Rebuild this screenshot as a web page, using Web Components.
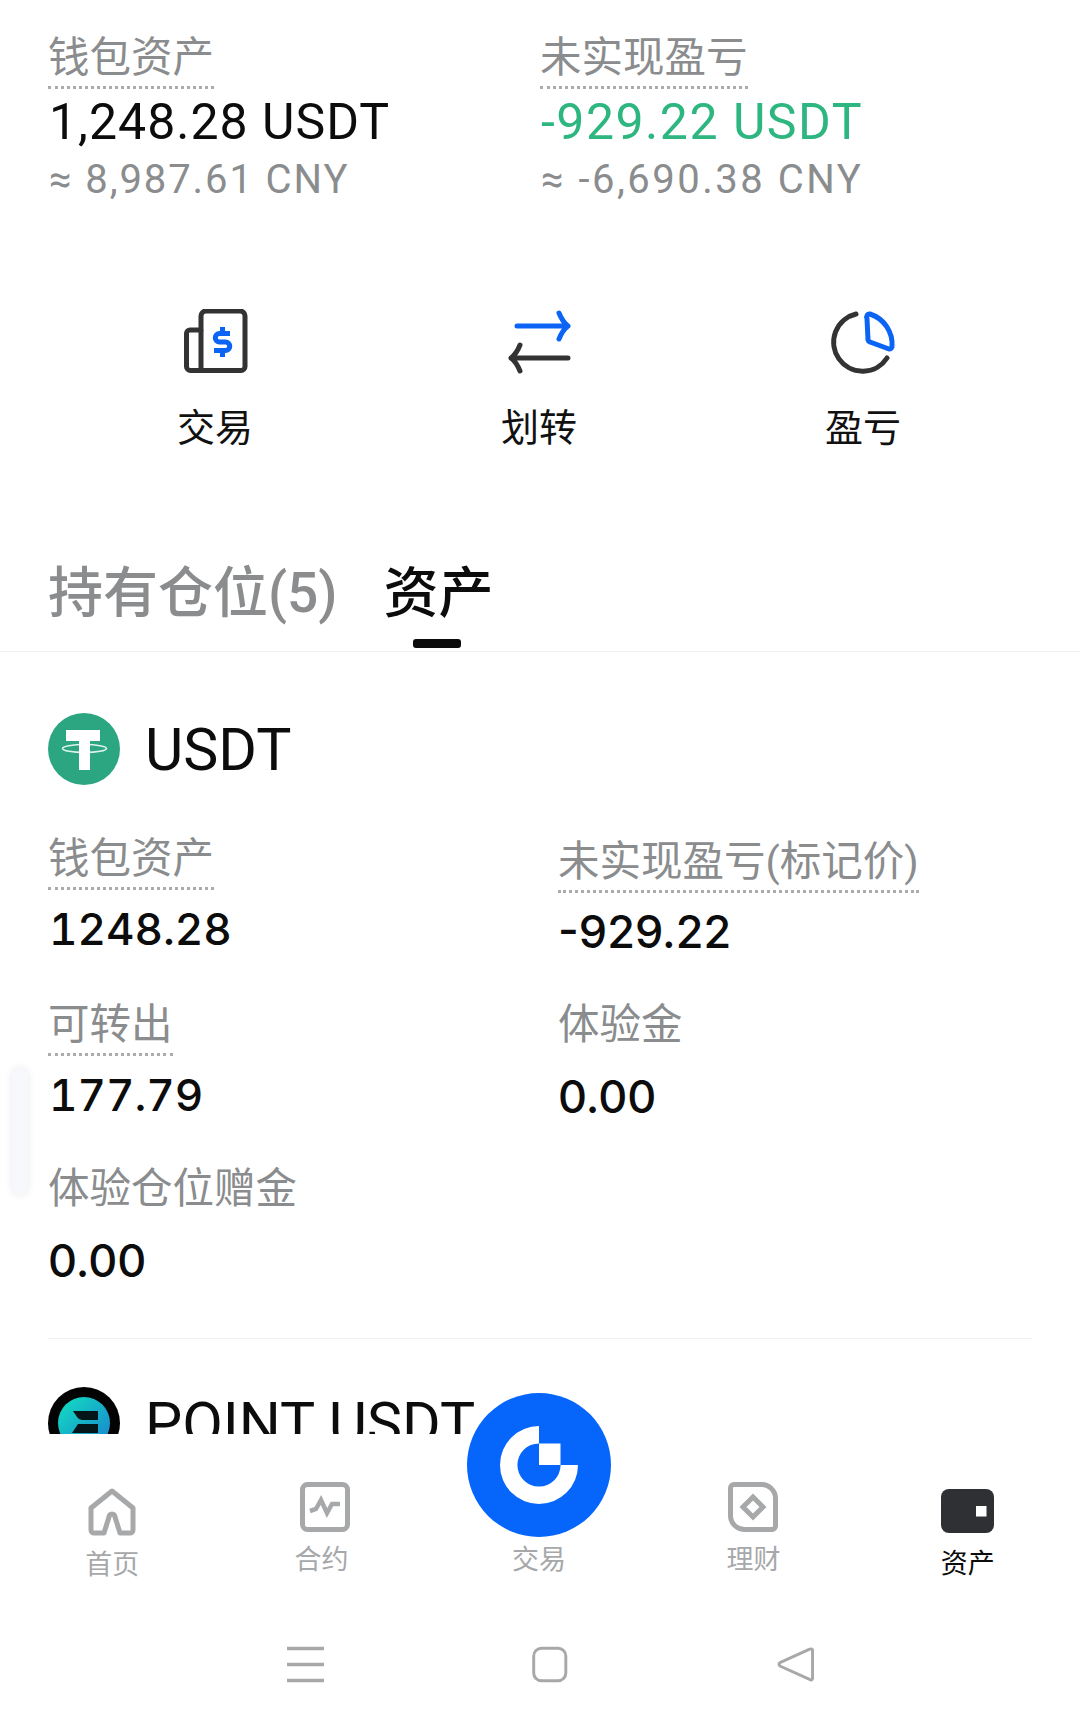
<!DOCTYPE html>
<html lang="zh">
<head>
<meta charset="utf-8">
<title>资产</title>
<style>
  html, body { margin: 0; padding: 0; background: #fff; }
  body { width: 1080px; height: 1729px; overflow: hidden; font-family: Roboto, "Noto Sans CJK SC", sans-serif; color: #0c0c0c; }
</style>
</head>
<body>
<wallet-screen>
  <div slot="scroll">
    <summary-row>
      <stat-item label="钱包资产" dotted value="1,248.28 USDT" sub="≈ 8,987.61 CNY"></stat-item>
      <stat-item label="未实现盈亏" dotted tone="green" value="-929.22 USDT" sub="≈ -6,690.38 CNY"></stat-item>
    </summary-row>
    <action-bar>
      <action-item label="交易">
        <svg width="66" height="66" viewBox="0 0 66 66" fill="none">
          <path d="M19 21H8a3.500 3.500 0 0 0-3.500 3.500V57.500a4 4 0 0 0 4 4H59a4 4 0 0 0 4-4V7a5 5 0 0 0-5-5H24a5 5 0 0 0-5 5Z" stroke="#333" stroke-width="5" stroke-linejoin="round"/>
          <path d="M19 21V61" stroke="#333" stroke-width="5"/>
          <path d="M48 24.500H37.500a4 4 0 0 0 0 8.500h6a4 4 0 0 1 0 8.500H32M40.500 18v6M40.500 41v7" stroke="#0b64f4" stroke-width="5"/>
        </svg>
      </action-item>
      <action-item label="划转">
        <svg width="66" height="66" viewBox="-2 0 66 66" fill="none" stroke-width="5" stroke-linecap="round" stroke-linejoin="round">
          <path d="M9 17H60M51 4C53 9 56 14 60 17C56 20 53 25 51 30" stroke="#0b64f4"/>
          <path d="M60 49H3M12 36C10 41 7 46 3 49C7 52 10 57 12 62" stroke="#333"/>
        </svg>
      </action-item>
      <action-item label="盈亏">
        <svg width="66" height="66" viewBox="0 0 66 66" fill="none" stroke-width="5" stroke-linecap="round" stroke-linejoin="round">
          <path d="M26 5A29 29 0 1 0 57 49" stroke="#333"/>
          <path d="M37 9.500A3 3 0 0 1 40 5A32 32 0 0 1 62 38A3 3 0 0 1 59 40L40 33A3 3 0 0 1 38 31Z" stroke="#0b64f4"/>
        </svg>
      </action-item>
    </action-bar>
    <tab-bar>
      <span>持有仓位(5)</span>
      <span slot="active">资产</span>
    </tab-bar>
    <asset-card name="USDT">
      <svg slot="icon" width="72" height="72" viewBox="0 0 72 72">
        <circle cx="36" cy="36" r="36" fill="#2ba680"/>
        <path d="M18 17H52V28H42V57H31V28H18Z" fill="#fff"/>
        <ellipse cx="36.500" cy="35.500" rx="22" ry="4" fill="none" stroke="#fff" stroke-width="1.600" opacity=".85"/>
      </svg>
      <div class="grid">
        <stat-item small tnum label="钱包资产" dotted value="1248.28"></stat-item>
        <stat-item small shift label="未实现盈亏(标记价)" dotted value="-929.22"></stat-item>
        <stat-item small tnum label="可转出" dotted value="177.79"></stat-item>
        <stat-item small label="体验金" value="0.00"></stat-item>
        <stat-item small label="体验仓位赠金" value="0.00"></stat-item>
      </div>
    </asset-card>
    <asset-card name="POINT USDT" last>
      <svg slot="icon" width="72" height="72" viewBox="0 0 72 72">
        <defs><linearGradient id="pt" x1="0" y1="0" x2="1" y2="1"><stop offset="0" stop-color="#12e0c0"/><stop offset="1" stop-color="#1a7fd0"/></linearGradient></defs>
        <circle cx="36" cy="36" r="36" fill="#030303"/>
        <circle cx="36" cy="36" r="26" fill="url(#pt)"/>
        <path d="M25 24H50V33H34Q31 33 29 30ZM30 37H50V46H24Z" fill="#04161a"/>
      </svg>
    </asset-card>
    <scroll-handle></scroll-handle>
  </div>
  <bottom-nav slot="nav">
    <nav-item label="首页" top="54" gap="11" offset="4">
      <svg width="50" height="48" viewBox="0 0 50 48" fill="none" stroke="#a6a8aa" stroke-width="5" stroke-linejoin="round">
        <path d="M25 3L46 20V42a3 3 0 0 1-3 3H33L28 29a3 3 0 0 0-6 0L17 45H7a3 3 0 0 1-3-3V20Z"/>
      </svg>
    </nav-item>
    <nav-item label="合约" top="48" gap="10" nudge="-3">
      <svg width="50" height="50" viewBox="0 0 50 50" fill="none">
        <rect x="2.500" y="2.500" width="45" height="45" rx="5" stroke="#a6a8aa" stroke-width="5"/>
        <path d="M10 29L16 27L21 18L27 31L32 22H40" stroke="#a6a8aa" stroke-width="4.500"/>
      </svg>
    </nav-item>
    <nav-item label="交易" top="108" gap="0"></nav-item>
    <nav-item label="理财" top="48" gap="10">
      <svg width="50" height="50" viewBox="0 0 50 50" fill="none" stroke="#a6a8aa" stroke-width="5">
        <path d="M6 2.500H33A14 14 0 0 1 47.500 16V44a3.500 3.500 0 0 1-3.500 3.500H17A14 14 0 0 1 2.500 34V6A3.500 3.500 0 0 1 6 2.500Z"/>
        <path d="M25 15L35 25L25 35L15 25Z"/>
      </svg>
    </nav-item>
    <nav-item label="资产" top="55" gap="13" active>
      <svg width="53" height="44" viewBox="0 0 53 44">
        <rect width="53" height="44" rx="8" fill="#2f3033"/>
        <rect x="35" y="17" width="10.500" height="10.500" fill="#fff"/>
      </svg>
    </nav-item>
    <trade-button></trade-button>
  </bottom-nav>
  <system-bar slot="system"></system-bar>
</wallet-screen>

<script>
// small helper so each element just declares its shadow html
function shadow(el, html) {
  el.attachShadow({ mode: "open" });
  el.shadowRoot.innerHTML = html;
}

window.customElements.define(
  "wallet-screen",
  class extends HTMLElement {
    constructor() {
      super();
      shadow(this, `
        <style>
          :host { display: flex; flex-direction: column; width: 1080px; height: 1729px; background: #fff; }
          .scroll { position: relative; height: 1434px; overflow: hidden; flex: none; }
        </style>
        <div class="scroll"><slot name="scroll"></slot></div>
        <slot name="nav"></slot>
        <slot name="system"></slot>`);
    }
  }
);

window.customElements.define(
  "summary-row",
  class extends HTMLElement {
    constructor() {
      super();
      shadow(this, `
        <style>
          :host { display: grid; grid-template-columns: 492px 492px; padding: 30px 48px 0; }
        </style>
        <slot></slot>`);
    }
  }
);

window.customElements.define(
  "stat-item",
  class extends HTMLElement {
    constructor() {
      super();
      const sub = this.getAttribute("sub");
      shadow(this, `
        <style>
          :host { display: flex; flex-direction: column; align-items: flex-start; }
          :host([shift]) { padding-top: 3px; }
          .label { font-size: 41.5px; line-height: 56px; color: #8a8c8e; white-space: nowrap; }
          :host([dotted]) .label { border-bottom: 3px dotted #a9abad; }
          .value { font-size: 50px; line-height: 67px; letter-spacing: 1px; white-space: nowrap; padding-left: 1px; }
          :host([tone="green"]) .value { color: #2db680; letter-spacing: 1.5px; }
          .sub { font-size: 40px; line-height: 48px; color: #8a8c8e; letter-spacing: 1.9px; white-space: nowrap; padding-left: 1px; }
          :host([tone="green"]) .sub { letter-spacing: 2.5px; }
          :host([small]) .value { font-family: Inter, Roboto, sans-serif; font-size: 45px; font-weight: 500; line-height: 64px; letter-spacing: 0; margin-top: 12px; padding-left: 0; }
          :host([small][dotted]) .value { margin-top: 7px; }
          :host([tnum]) .value { font-variant-numeric: tabular-nums; font-size: 44px; padding-left: 1px; }
        </style>
        <div class="label">${this.getAttribute("label")}</div>
        <div class="value">${this.getAttribute("value")}</div>
        ${sub ? `<div class="sub">${sub}</div>` : ""}`);
    }
  }
);

window.customElements.define(
  "action-bar",
  class extends HTMLElement {
    constructor() {
      super();
      shadow(this, `
        <style>
          :host { display: grid; grid-template-columns: repeat(3, 324px); padding: 105px 53px 0; }
        </style>
        <slot></slot>`);
    }
  }
);

window.customElements.define(
  "action-item",
  class extends HTMLElement {
    constructor() {
      super();
      shadow(this, `
        <style>
          :host { display: flex; flex-direction: column; align-items: center; }
          .icon { height: 66px; display: flex; }
          .label { font-size: 38px; line-height: 50px; color: #111; margin-top: 28px; }
        </style>
        <div class="icon"><slot></slot></div>
        <div class="label">${this.getAttribute("label")}</div>`);
    }
  }
);

window.customElements.define(
  "tab-bar",
  class extends HTMLElement {
    constructor() {
      super();
      shadow(this, `
        <style>
          :host { display: flex; gap: 46px; height: 199px; box-sizing: border-box; padding: 108px 48px 0; border-bottom: 1px solid #f1f1f1; font-size: 55px; font-weight: 500; line-height: 64px; color: #8a8c8e; }
          .active { position: relative; color: #0c0c0c; }
          .active::after { content: ""; position: absolute; left: 29px; top: 78px; width: 48px; height: 9px; border-radius: 3px; background: #0c0c0c; }
        </style>
        <div><slot></slot></div>
        <div class="active"><slot name="active"></slot></div>`);
    }
  }
);

window.customElements.define(
  "asset-card",
  class extends HTMLElement {
    constructor() {
      super();
      shadow(this, `
        <style>
          :host { display: block; margin: 0 48px; }
          :host([last]) { padding-top: 48px; }
          :host(:not([last])) { padding-top: 61px; border-bottom: 1px solid #f1f1f1; height: 625px; }
          .head { display: flex; align-items: center; gap: 25px; height: 72px; font-size: 59px; color: #0c0c0c; white-space: nowrap; }
          ::slotted(.grid) { display: grid; grid-template-columns: 510px 1fr; grid-template-rows: 166px 164px auto; margin-top: 46px; }
        </style>
        <div class="head"><slot name="icon"></slot><span>${this.getAttribute("name")}</span></div>
        <slot></slot>`);
    }
  }
);

window.customElements.define(
  "scroll-handle",
  class extends HTMLElement {
    constructor() {
      super();
      shadow(this, `
        <style>
          :host { position: absolute; left: 12px; top: 1068px; width: 16px; height: 127px; border-radius: 8px; background: #f7f8fc; box-shadow: 0 0 8px rgba(0,0,0,.09); }
        </style>`);
    }
  }
);

window.customElements.define(
  "bottom-nav",
  class extends HTMLElement {
    constructor() {
      super();
      shadow(this, `
        <style>
          :host { position: relative; display: flex; height: 186px; padding: 0 5px 0 3px; background: #fff; box-sizing: border-box; flex: none; }
        </style>
        <slot></slot>`);
    }
  }
);

window.customElements.define(
  "nav-item",
  class extends HTMLElement {
    constructor() {
      super();
      const top = this.getAttribute("top");
      const gap = this.getAttribute("gap");
      const nudge = this.getAttribute("nudge") || 0;
      const offset = this.getAttribute("offset") || 0;
      shadow(this, `
        <style>
          :host { flex: 1 1 0; display: flex; flex-direction: column; align-items: center; padding-top: ${top}px; }
          .icon { display: flex; margin-left: ${offset}px; }
          .label { font-size: 27px; line-height: 36px; color: #a6a8aa; margin-top: ${gap}px; margin-left: ${nudge * 2 + offset * 1}px; }
          :host([active]) .label { color: #0c0c0c; }
        </style>
        <div class="icon"><slot></slot></div>
        <div class="label">${this.getAttribute("label")}</div>`);
    }
  }
);

window.customElements.define(
  "trade-button",
  class extends HTMLElement {
    constructor() {
      super();
      shadow(this, `
        <style>
          :host { position: absolute; left: 467px; top: -41px; width: 144px; height: 144px; }
          svg { display: block; }
        </style>
        <svg width="144" height="144" viewBox="-72 -72 144 144">
          <circle r="72" fill="#0666fc"/>
          <path d="M0-39A39 39 0 1 0 39 0H21.600A21.600 21.600 0 1 1 0-21.600Z" fill="#fff"/>
          <rect x="0" y="-21.500" width="21.500" height="21.500" fill="#fff"/>
        </svg>`);
    }
  }
);

window.customElements.define(
  "system-bar",
  class extends HTMLElement {
    constructor() {
      super();
      shadow(this, `
        <style>
          :host { display: grid; grid-template-columns: repeat(3, 245px); justify-content: center; height: 109px; padding: 26px 0 0 20px; box-sizing: border-box; flex: none; }
          div { display: flex; justify-content: center; }
        </style>
        <div><svg width="37" height="37" viewBox="0 0 38 37" fill="none" stroke="#a8a8a8" stroke-width="3.500"><path d="M0 2H38M0 18.500H38M0 35H38"/></svg></div>
        <div><svg width="36" height="37" viewBox="0 0 37 37"><rect x="1.750" y="1.750" width="33" height="33.500" rx="8" fill="none" stroke="#a8a8a8" stroke-width="3"/></svg></div>
        <div><svg width="37" height="37" viewBox="0 0 38 37"><path d="M35 2.500a1.500 1.500 0 0 1 1.500 1.500V33a1.500 1.500 0 0 1-2.500 1L3 20a2.500 2.500 0 0 1 0-3.500L33 3Z" fill="none" stroke="#a8a8a8" stroke-width="3" stroke-linejoin="round"/></svg></div>`);
    }
  }
);
</script>
</body>
</html>
